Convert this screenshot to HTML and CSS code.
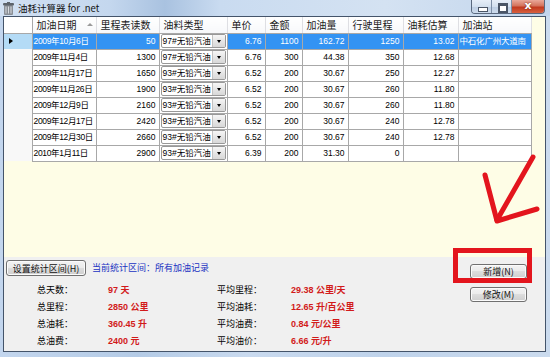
FILE: index.html
```html
<!DOCTYPE html>
<html lang="zh-CN">
<head>
    <meta charset="UTF-8">
    <title>油耗计算器 for .net</title>
    <link rel="stylesheet" href="styles.css">
</head>
<body>
<div class="window">
    <div class="titlebar">
        <svg class="app-icon" width="11" height="13" viewBox="0 0 11 13">
            <rect x="1" y="3" width="9" height="10" rx="1" fill="#8a8f96"/>
            <rect x="2.5" y="4.5" width="1" height="7" fill="#d8dbe0"/>
            <rect x="5" y="4.5" width="1" height="7" fill="#d8dbe0"/>
            <rect x="7.5" y="4.5" width="1" height="7" fill="#d8dbe0"/>
            <rect x="0" y="1" width="11" height="2.5" rx="1" fill="#5d636b"/>
            <rect x="4" y="0" width="3" height="1.5" fill="#5d636b"/>
        </svg>
        <span class="title">油耗计算器 for .net</span>
        <div class="caption-buttons">
            <span class="cap cap-min"></span>
            <span class="cap cap-max"></span>
            <span class="cap cap-close">x</span>
        </div>
    </div>

    <div class="client">
        <div class="grid">
            <table class="records">
                <colgroup>
                    <col style="width:28px"><col style="width:64px"><col style="width:63px"><col style="width:68px">
                    <col style="width:38px"><col style="width:37px"><col style="width:46px"><col style="width:55px">
                    <col style="width:55px"><col style="width:73px">
                </colgroup>
                <thead>
                    <tr>
                        <th class="rowhead"></th>
                        <th><div class="sort-head">加油日期<i class="sort"></i></div></th>
                        <th>里程表读数</th>
                        <th>油料类型</th>
                        <th>单价</th>
                        <th>金额</th>
                        <th>加油量</th>
                        <th>行驶里程</th>
                        <th>油耗估算</th>
                        <th>加油站</th>
                    </tr>
                </thead>
                <tbody>
                    <tr class="selected">
                        <td class="rowhead"><i class="pointer"></i></td>
                        <td class="date">2009年10月6日</td><td class="num">50</td>
                        <td class="combo-cell"><div class="combo"><span>97#无铅汽油</span><b class="drop"></b></div></td>
                        <td class="num">6.76</td><td class="num">1100</td><td class="num">162.72</td>
                        <td class="num">1250</td><td class="num">13.02</td><td class="station">中石化广州大道南</td>
                    </tr>
                    <tr>
                        <td class="rowhead"></td>
                        <td class="date">2009年11月4日</td><td class="num">1300</td>
                        <td class="combo-cell"><div class="combo"><span>97#无铅汽油</span><b class="drop"></b></div></td>
                        <td class="num">6.76</td><td class="num">300</td><td class="num">44.38</td>
                        <td class="num">350</td><td class="num">12.68</td><td></td>
                    </tr>
                    <tr>
                        <td class="rowhead"></td>
                        <td class="date">2009年11月17日</td><td class="num">1650</td>
                        <td class="combo-cell"><div class="combo"><span>93#无铅汽油</span><b class="drop"></b></div></td>
                        <td class="num">6.52</td><td class="num">200</td><td class="num">30.67</td>
                        <td class="num">250</td><td class="num">12.27</td><td></td>
                    </tr>
                    <tr>
                        <td class="rowhead"></td>
                        <td class="date">2009年11月26日</td><td class="num">1900</td>
                        <td class="combo-cell"><div class="combo"><span>93#无铅汽油</span><b class="drop"></b></div></td>
                        <td class="num">6.52</td><td class="num">200</td><td class="num">30.67</td>
                        <td class="num">260</td><td class="num">11.80</td><td></td>
                    </tr>
                    <tr>
                        <td class="rowhead"></td>
                        <td class="date">2009年12月9日</td><td class="num">2160</td>
                        <td class="combo-cell"><div class="combo"><span>93#无铅汽油</span><b class="drop"></b></div></td>
                        <td class="num">6.52</td><td class="num">200</td><td class="num">30.67</td>
                        <td class="num">260</td><td class="num">11.80</td><td></td>
                    </tr>
                    <tr>
                        <td class="rowhead"></td>
                        <td class="date">2009年12月17日</td><td class="num">2420</td>
                        <td class="combo-cell"><div class="combo"><span>93#无铅汽油</span><b class="drop"></b></div></td>
                        <td class="num">6.52</td><td class="num">200</td><td class="num">30.67</td>
                        <td class="num">240</td><td class="num">12.78</td><td></td>
                    </tr>
                    <tr>
                        <td class="rowhead"></td>
                        <td class="date">2009年12月30日</td><td class="num">2660</td>
                        <td class="combo-cell"><div class="combo"><span>93#无铅汽油</span><b class="drop"></b></div></td>
                        <td class="num">6.52</td><td class="num">200</td><td class="num">30.67</td>
                        <td class="num">240</td><td class="num">12.78</td><td></td>
                    </tr>
                    <tr>
                        <td class="rowhead"></td>
                        <td class="date">2010年1月11日</td><td class="num">2900</td>
                        <td class="combo-cell"><div class="combo"><span>93#无铅汽油</span><b class="drop"></b></div></td>
                        <td class="num">6.39</td><td class="num">200</td><td class="num">31.30</td>
                        <td class="num">0</td><td class="num"></td><td></td>
                    </tr>
                </tbody>
            </table>
        </div>

        <div class="panel">
            <div class="stats-side">
                <div class="range-row">
                    <button class="btn range-btn">设置统计区间(H)</button>
                    <span class="range-text">当前统计区间：所有加油记录</span>
                </div>
                <div class="stats">
                    <span class="label">总天数：</span><span class="value">97 天</span>
                    <span class="label2">平均里程：</span><span class="value2">29.38 公里/天</span>

                    <span class="label">总里程：</span><span class="value">2850 公里</span>
                    <span class="label2">平均油耗：</span><span class="value2">12.65 升/百公里</span>

                    <span class="label">总油耗：</span><span class="value">360.45 升</span>
                    <span class="label2">平均油费：</span><span class="value2">0.84 元/公里</span>

                    <span class="label">总油费：</span><span class="value">2400 元</span>
                    <span class="label2">平均油价：</span><span class="value2">6.66 元/升</span>
                </div>
            </div>
            <div class="actions">
                <button class="btn">新增(N)</button>
                <button class="btn">修改(M)</button>
            </div>
        </div>
    </div>

    <!-- red hand-drawn markup over the screenshot -->
    <svg class="markup" width="550" height="357" viewBox="0 0 550 357">
        <rect x="455.5" y="250.5" width="74" height="30" fill="none" stroke="#e3151d" stroke-width="5"/>
        <line x1="533" y1="157" x2="497" y2="220" stroke="#e3151d" stroke-width="5" stroke-linecap="round"/>
        <polyline points="485,175 497,221 537,209" fill="none" stroke="#e3151d" stroke-width="5" stroke-linecap="round" stroke-linejoin="round"/>
    </svg>
</div>
</body>
</html>
```

FILE: styles.css
```css
* {
    box-sizing: border-box;
}
body {
    margin: 0;
    width: 550px;
    height: 357px;
    overflow: hidden;
    font-family: "Liberation Sans", "Noto Sans CJK SC", sans-serif;
    color: #000;
}
.window {
    position: relative;
    width: 550px;
    height: 357px;
    display: flex;
    flex-direction: column;
    padding: 0 4px 5px 3px;
    background: linear-gradient(90deg, #c3d6ee 0%, #b4cbe6 25%, #c9daef 45%, #bfd3eb 70%, #cbdbee 100%);
}
.titlebar {
    height: 16px;
    display: flex;
    align-items: flex-start;
    background: linear-gradient(90deg, #d2e1f3 0%, #c4d7ee 20%, #a9c2e0 30%, #c9dbf0 40%, #d4e2f2 70%, #c2d5ec 100%);
    margin: 0 -4px 0 -3px;
    padding-left: 3px;
}
.app-icon {
    margin-top: 2px;
}
.title {
    margin-left: 4px;
    margin-top: 1px;
    font-size: 9.5px;
    line-height: 14px;
    color: #111;
    font-family: "Noto Sans CJK SC", sans-serif;
}
.caption-buttons {
    margin-left: auto;
    margin-right: 5px;
    display: flex;
    height: 14px;
    border: 1px solid #59687e;
    border-top: none;
    border-radius: 0 0 4px 4px;
    overflow: hidden;
}
.cap {
    width: 20px;
    height: 13px;
    position: relative;
    background: linear-gradient(180deg, #e6eef8 0%, #d3e0ef 50%, #bccde3 51%, #cddbec 100%);
    border-right: 1px solid #7d8ea6;
}
.cap-min::after {
    content: "";
    position: absolute;
    left: 6px;
    top: 7px;
    width: 8px;
    height: 3px;
    background: #fff;
    border: 1px solid #4a5566;
}
.cap-max::after {
    content: "";
    position: absolute;
    left: 6px;
    top: 3px;
    width: 8px;
    height: 7px;
    border: 1px solid #4a5566;
    border-top-width: 2px;
    background: #fff;
    box-shadow: inset 0 0 0 1px #4a5566;
}
.cap-close {
    width: 32px;
    border-right: none;
    background: linear-gradient(180deg, #e9a899 0%, #d4735c 45%, #c2391e 55%, #d7603f 100%);
    color: #fff;
    font-weight: bold;
    font-size: 11px;
    line-height: 11px;
    text-align: center;
    font-family: "DejaVu Sans", sans-serif;
    text-shadow: 0 0 2px #6b1a0c;
}

/* client area */
.client {
    flex: 1;
    display: flex;
    flex-direction: column;
    border: 1px solid #44546a;
    background: #f0f0f0;
}
.grid {
    height: 240px;
    background: #fefde6;
}
.records {
    border-collapse: collapse;
    table-layout: fixed;
    width: 527px;
    font-size: 8.5px;
}
.records th {
    height: 16px;
    padding: 0 0 0 4px;
    background: linear-gradient(180deg, #ffffff 0%, #f7f8fa 100%);
    font-weight: normal;
    font-size: 10px;
    text-align: left;
    color: #1b1b1b;
    border-right: 1px solid #dedfe3;
    border-bottom: 1px solid #a8a8a8;
    white-space: nowrap;
    overflow: hidden;
    font-family: "Noto Sans CJK SC", sans-serif;
}
.sort-head {
    display: flex;
    align-items: center;
}
.sort {
    margin-left: auto;
    margin-right: 3px;
    width: 0;
    height: 0;
    border-left: 3px solid transparent;
    border-right: 3px solid transparent;
    border-bottom: 3px solid #9a9a9a;
}
.records td {
    height: 16px;
    padding: 0 2px;
    background: #fff;
    border: 1px solid #a8a8a8;
    white-space: nowrap;
    overflow: hidden;
    line-height: 14px;
}
.records .date {
    padding: 0 0 0 1px;
    letter-spacing: -0.35px;
}
.records .num {
    text-align: right;
    padding-right: 3px;
}
.records .rowhead {
    background: #f8f8f8;
    border-top: none;
    border-bottom: none;
    border-left: none;
    border-right: 1px solid #a8a8a8;
    padding: 0 0 0 5px;
}
.records thead .rowhead {
    background: #fff;
    border-bottom: 1px solid #a8a8a8;
}
.pointer {
    display: block;
    width: 0;
    height: 0;
    border-top: 3.5px solid transparent;
    border-bottom: 3.5px solid transparent;
    border-left: 4px solid #000;
}
.selected td {
    background: #3393f3;
    color: #fff;
}
.selected .rowhead {
    background: #b4dbf6;
}
.selected .combo-cell {
    background: #fff;
    color: #000;
}
.records .station {
    font-size: 8.5px;
    padding: 0 0 0 1px;
    letter-spacing: -0.2px;
}
.records .combo-cell {
    padding: 0 1px;
}
.combo {
    display: flex;
    height: 14px;
    border: 1px solid #989898;
    border-radius: 2px;
    background: #fff;
}
.combo span {
    flex: 1;
    padding-left: 1px;
    line-height: 12px;
}
.drop {
    position: relative;
    width: 13px;
    border-left: 1px solid #c2c2c2;
    background: linear-gradient(180deg, #f6f6f6 0%, #e6e6e6 50%, #d8d8d8 100%);
}
.drop::after {
    content: "";
    position: absolute;
    left: 4px;
    top: 5px;
    border-left: 2.5px solid transparent;
    border-right: 2.5px solid transparent;
    border-top: 3px solid #000;
}

/* bottom panel */
.panel {
    flex: 1;
    display: flex;
    font-family: "Liberation Sans", "Noto Sans CJK SC", sans-serif;
    font-size: 9px;
}
.stats-side {
    flex: 1;
}
.range-row {
    height: 22px;
    display: flex;
    align-items: flex-start;
    padding: 3px 0 0 2px;
}
.btn {
    height: 16px;
    padding: 0;
    font-family: "Noto Sans CJK SC", sans-serif;
    font-size: 9px;
    line-height: 13px;
    color: #111;
    border: 1px solid #707070;
    border-radius: 3px;
    background: linear-gradient(180deg, #f3f3f3 0%, #ebebeb 48%, #dddddd 50%, #cfcfcf 100%);
    box-shadow: inset 0 0 0 1px #fbfbfb;
}
.range-btn {
    width: 80px;
}
.range-text {
    margin-left: 6px;
    margin-top: 1px;
    color: #2132c2;
    line-height: 13px;
    font-family: "Noto Sans CJK SC", sans-serif;
}
.stats {
    display: grid;
    grid-template-columns: 69px 144px 74px auto;
    grid-auto-rows: 17px;
    align-items: center;
    margin-top: 2px;
}
.label {
    text-align: right;
    font-family: "Noto Sans CJK SC", sans-serif;
}
.label2 {
    font-family: "Noto Sans CJK SC", sans-serif;
}
.value,
.value2 {
    color: #d21a1a;
    font-weight: bold;
    white-space: nowrap;
}
.value {
    padding-left: 35px;
}
.actions {
    display: flex;
    flex-direction: column;
    gap: 8px;
    padding: 7px 18px 0 0;
}
.actions .btn {
    width: 57px;
    height: 15px;
}

.markup {
    position: absolute;
    left: 0;
    top: 0;
    pointer-events: none;
}
```
